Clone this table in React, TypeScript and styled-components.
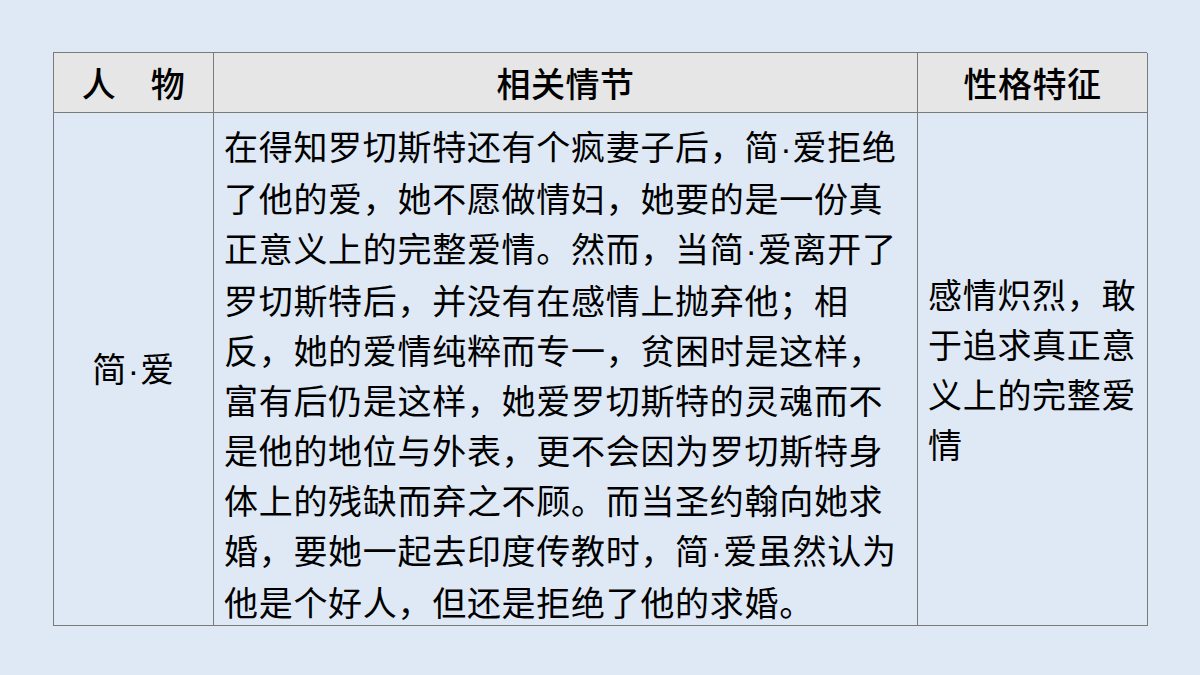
import React from "react";
import styled, { createGlobalStyle } from "styled-components";

const Global = createGlobalStyle`
  html, body { margin: 0; padding: 0; background: #dfe9f5; }
  body { font-family: "Noto Sans CJK SC", "Noto Sans", sans-serif; color: #000; }
`;

const Page = styled.div`
  width: 1200px;
  height: 675px;
  box-sizing: border-box;
  padding: 52px 0 0 53px;
  background: #dfe9f5;
`;

const Table = styled.div`
  display: grid;
  grid-template-columns: 160px 704px 230px;
  grid-template-rows: 60px 513px;
  width: 1094px;
  box-sizing: border-box;
  border-top: 1px solid #7a7a7a;
  border-left: 1px solid #7a7a7a;
`;

const Cell = styled.div<{ $head?: boolean; $align?: "center" | "left"; $valign?: "center" | "start" }>`
  box-sizing: border-box;
  border-right: 1px solid #7a7a7a;
  border-bottom: 1px solid #7a7a7a;
  background: ${(p) => (p.$head ? "#e6e6e6" : "transparent")};
  display: flex;
  flex-direction: column;
  justify-content: ${(p) => (p.$valign === "start" ? "flex-start" : "center")};
  align-items: ${(p) => (p.$align === "left" ? "flex-start" : "center")};
  padding: ${(p) => (p.$valign === "start" ? "8px 10px 0 10px" : "0 10px")};
  font-size: 34px;
  font-weight: ${(p) => (p.$head ? 500 : 400)};
  line-height: 50px;
  letter-spacing: ${(p) => (p.$head ? "0.5px" : "0.7px")};
`;

const Line = styled.div`
  white-space: nowrap;
`;

const Dot = styled.span`
  font-family: "Liberation Sans", sans-serif;
  letter-spacing: 0;
  padding: 0 1px;
`;

const withDots = (s: string) => {
  const parts = s.split("·");
  return parts.map((p, i) => (
    <React.Fragment key={i}>
      {p}
      {i < parts.length - 1 && <Dot>·</Dot>}
    </React.Fragment>
  ));
};

const plot = [
  "在得知罗切斯特还有个疯妻子后，简·爱拒绝",
  "了他的爱，她不愿做情妇，她要的是一份真",
  "正意义上的完整爱情。然而，当简·爱离开了",
  "罗切斯特后，并没有在感情上抛弃他；相",
  "反，她的爱情纯粹而专一，贫困时是这样，",
  "富有后仍是这样，她爱罗切斯特的灵魂而不",
  "是他的地位与外表，更不会因为罗切斯特身",
  "体上的残缺而弃之不顾。而当圣约翰向她求",
  "婚，要她一起去印度传教时，简·爱虽然认为",
  "他是个好人，但还是拒绝了他的求婚。",
];

const traits = ["感情炽烈，敢", "于追求真正意", "义上的完整爱", "情"];

export default function App() {
  return (
    <Page>
      <Global />
      <Table>
        <Cell $head>
          <Line>人　物</Line>
        </Cell>
        <Cell $head>
          <Line>相关情节</Line>
        </Cell>
        <Cell $head>
          <Line>性格特征</Line>
        </Cell>
        <Cell>
          <Line>{withDots("简·爱")}</Line>
        </Cell>
        <Cell $align="left" $valign="start">
          {plot.map((l, i) => (
            <Line key={i}>{withDots(l)}</Line>
          ))}
        </Cell>
        <Cell $align="left">
          {traits.map((l, i) => (
            <Line key={i}>{l}</Line>
          ))}
        </Cell>
      </Table>
    </Page>
  );
}
